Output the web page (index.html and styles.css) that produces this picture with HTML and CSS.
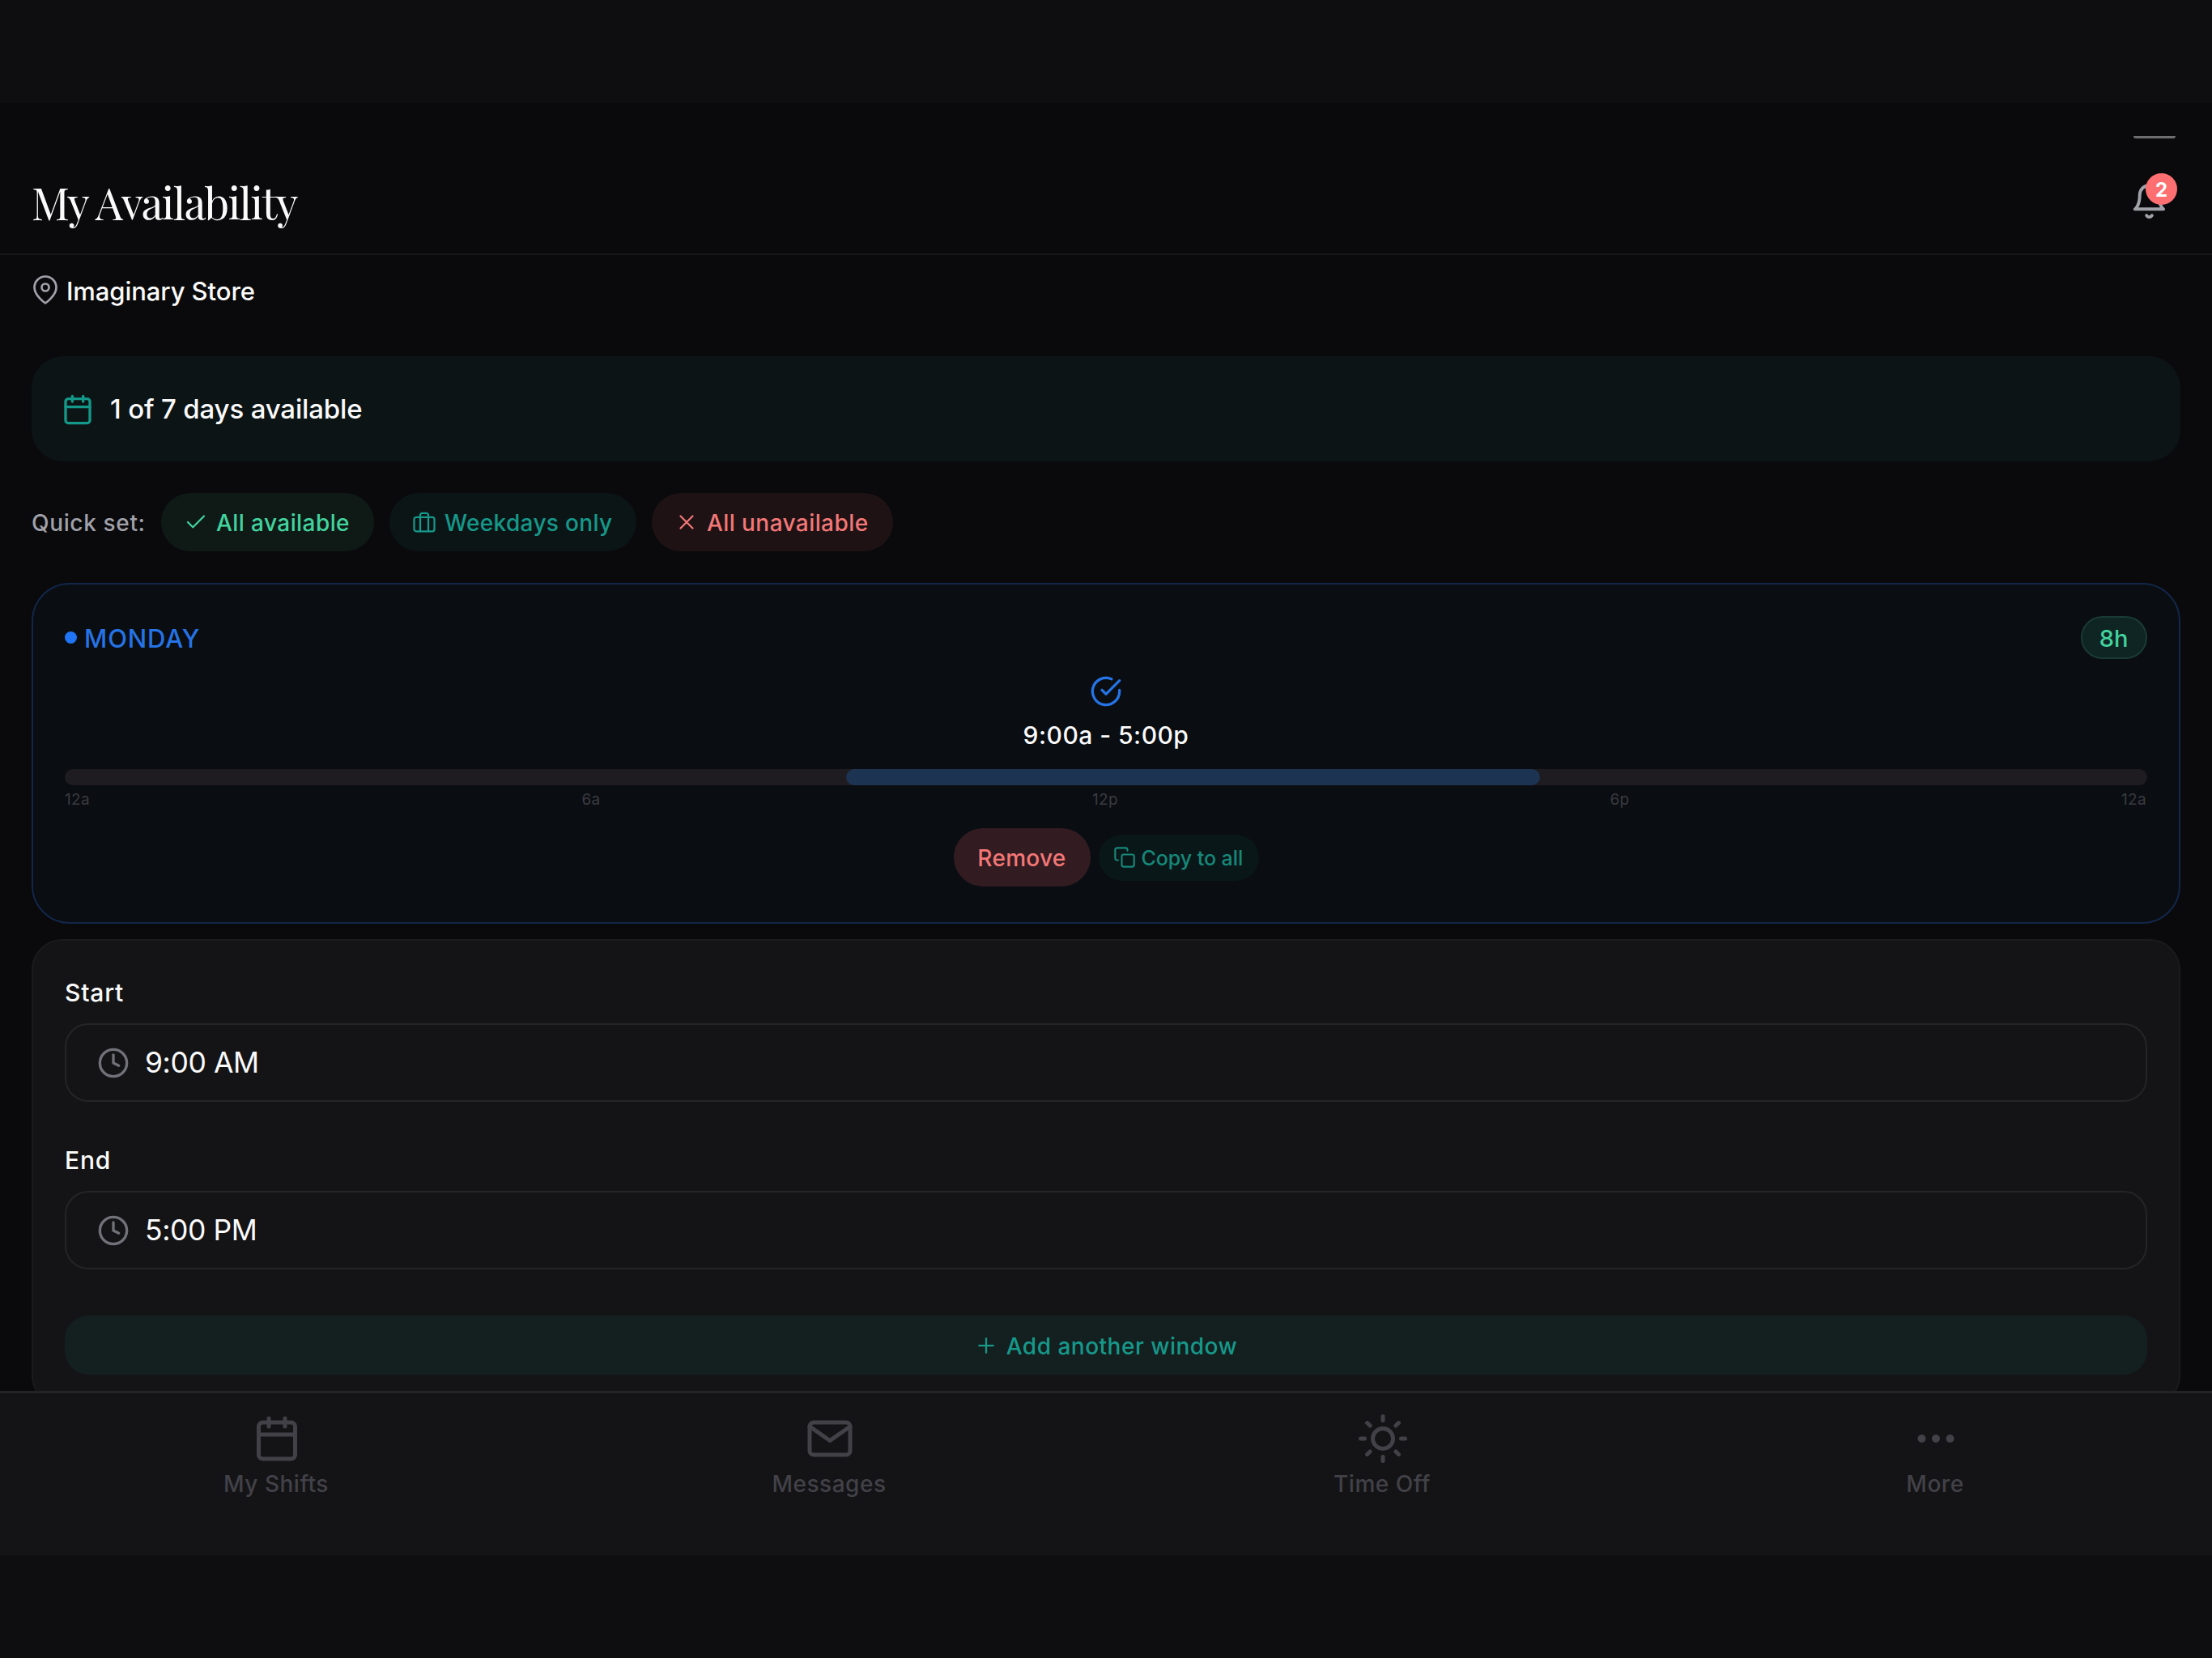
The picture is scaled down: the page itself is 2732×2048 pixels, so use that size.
FILE: index.html
```html
<!DOCTYPE html>
<html lang="en">
<head>
<meta charset="utf-8">
<title>My Availability</title>
<link rel="stylesheet" href="styles.css">
</head>
<body>
<div class="app">
  <header class="header">
    <div class="handle"></div>
    <div class="header-row">
      <h1 class="title">My Availability</h1>
      <div class="bell">
        <svg class="icon" width="47" height="47" viewBox="0 0 24 24"><path d="M18 8A6 6 0 0 0 6 8c0 7-3 9-3 9h18s-3-2-3-9"/><path d="M13.73 21a2 2 0 0 1-3.46 0"/></svg>
        <span class="bell-count">2</span>
      </div>
    </div>
  </header>

  <main class="content">
    <div class="store">
      <svg class="icon store-pin" width="36" height="36" viewBox="0 0 24 24"><path d="M21 10c0 7-9 13-9 13s-9-6-9-13a9 9 0 0 1 18 0z"/><circle cx="12" cy="10" r="3"/></svg>
      <span class="store-name">Imaginary Store</span>
    </div>

    <section class="summary">
      <svg class="icon" width="40" height="40" viewBox="0 0 24 24"><rect x="3" y="4" width="18" height="18" rx="2"/><path d="M16 2v4M8 2v4M3 10h18"/></svg>
      <span class="summary-text">1 of 7 days available</span>
    </section>

    <div class="quick">
      <span class="quick-label">Quick set:</span>
      <button class="pill pill-green"><svg class="icon" width="30" height="30" viewBox="0 0 24 24"><path d="M20 6L9 17l-5-5"/></svg><span>All available</span></button>
      <button class="pill pill-teal"><svg class="icon" width="30" height="30" viewBox="0 0 24 24"><rect x="2" y="7" width="20" height="14" rx="2"/><path d="M16 21V5a2 2 0 0 0-2-2h-4a2 2 0 0 0-2 2v16"/></svg><span>Weekdays only</span></button>
      <button class="pill pill-red"><svg class="icon" width="30" height="30" viewBox="0 0 24 24"><path d="M18 6L6 18M6 6l12 12"/></svg><span>All unavailable</span></button>
    </div>

    <section class="day">
      <div class="day-head">
        <span class="day-dot"></span>
        <span class="day-name">MONDAY</span>
        <span class="day-hours">8h</span>
      </div>
      <svg class="icon day-check" width="40" height="40" viewBox="0 0 24 24"><path d="M22 11.08V12a10 10 0 1 1-5.93-9.14"/><path d="M22 4L12 14.01l-3-3"/></svg>
      <div class="day-range"><span>9:00a - 5:00p</span></div>
      <div class="track"><div class="track-fill" style="margin-left:37.5%;width:33.333%"></div></div>
      <div class="ticks"><span>12a</span><span>6a</span><span>12p</span><span>6p</span><span>12a</span></div>
      <div class="actions">
        <button class="remove"><span>Remove</span></button>
        <button class="copy"><svg class="icon" width="28" height="28" viewBox="0 0 24 24"><rect x="9" y="9" width="13" height="13" rx="2"/><path d="M5 15H4a2 2 0 0 1-2-2V4a2 2 0 0 1 2-2h9a2 2 0 0 1 2 2v1"/></svg><span>Copy to all</span></button>
      </div>
    </section>

    <section class="editor">
      <div class="field">
        <label class="field-label"><span>Start</span></label>
        <div class="input"><svg class="icon" width="40" height="40" viewBox="0 0 24 24"><circle cx="12" cy="12" r="10"/><path d="M12 6v6l4 2"/></svg><span>9:00 AM</span></div>
      </div>
      <div class="field">
        <label class="field-label"><span>End</span></label>
        <div class="input"><svg class="icon" width="40" height="40" viewBox="0 0 24 24"><circle cx="12" cy="12" r="10"/><path d="M12 6v6l4 2"/></svg><span>5:00 PM</span></div>
      </div>
      <button class="add"><svg class="icon" width="30" height="30" viewBox="0 0 24 24"><path d="M12 5v14M5 12h14"/></svg><span>Add another window</span></button>
    </section>
  </main>

  <nav class="nav">
    <a class="tab"><svg class="icon" width="60" height="60" viewBox="0 0 24 24"><rect x="3" y="4" width="18" height="18" rx="2"/><path d="M16 2v4M8 2v4M3 10h18"/></svg><span>My Shifts</span></a>
    <a class="tab"><svg class="icon" width="60" height="60" viewBox="0 0 24 24"><path d="M4 4h16c1.1 0 2 .9 2 2v12c0 1.1-.9 2-2 2H4c-1.1 0-2-.9-2-2V6c0-1.1.9-2 2-2z"/><path d="M22 6l-10 7L2 6"/></svg><span>Messages</span></a>
    <a class="tab"><svg class="icon" width="60" height="60" viewBox="0 0 24 24"><circle cx="12" cy="12" r="5"/><path d="M12 1v2M12 21v2M4.22 4.22l1.42 1.42M18.36 18.36l1.42 1.42M1 12h2M21 12h2M4.22 19.78l1.42-1.42M18.36 5.64l1.42-1.42"/></svg><span>Time Off</span></a>
    <a class="tab"><svg class="icon" width="60" height="60" viewBox="0 0 24 24"><circle cx="12" cy="12" r="1"/><circle cx="19" cy="12" r="1"/><circle cx="5" cy="12" r="1"/></svg><span>More</span></a>
  </nav>
</div>
</body>
</html>
```

FILE: styles.css
```css
* { box-sizing: border-box; }

body {
  margin: 0;
  background: #0e0e10;
  color: #fafafa;
  font-family: Inter, "Liberation Sans", sans-serif;
  font-weight: 500;
}

button {
  border: 0;
  padding: 0;
  font: inherit;
  color: inherit;
  letter-spacing: inherit;
  background: none;
}

span { white-space: nowrap; }

.icon {
  display: block;
  flex: none;
  fill: none;
  stroke: currentColor;
  stroke-width: 2;
  stroke-linecap: round;
  stroke-linejoin: round;
}

.app {
  height: 2048px;
  padding: 127px 0;
  display: flex;
  flex-direction: column;
}

/* Header */
.header {
  height: 188px;
  flex: none;
  display: flex;
  flex-direction: column;
  background: #0a0a0c;
  border-bottom: 2px solid #171719;
}

.handle {
  width: 52px;
  height: 3px;
  margin: 41px 45px 0 0;
  align-self: flex-end;
  border-radius: 0 0 4px 4px;
  background: #6e6e71;
}

.header-row {
  flex: 1;
  display: flex;
  align-items: center;
  justify-content: space-between;
  padding: 22px 54px 0 39px;
}

.title {
  margin: 0 0 7px;
  font-family: "Playfair Display", "Liberation Serif", serif;
  font-size: 54px;
  line-height: 64px;
  font-weight: 400;
  letter-spacing: -1.68px;
}

.bell {
  position: relative;
  margin-bottom: 10px;
  color: #a1a1aa;
}

.bell-count {
  position: absolute;
  left: 19px;
  top: -11px;
  width: 39px;
  height: 39px;
  border-radius: 50%;
  background: #fd6f70;
  color: #fff;
  font-size: 24px;
  font-weight: 700;
  line-height: 41px;
  text-align: center;
}

/* Scrolling content */
.content {
  height: 1403px;
  flex: none;
  padding: 0 39px;
  overflow: hidden;
  background: #0a0a0c;
}

.store {
  height: 90px;
  margin-bottom: 35px;
  display: flex;
  align-items: center;
  gap: 8px;
}

.store-pin {
  color: #a1a1aa;
  stroke-width: 1.8;
  margin: 0 0 4px -1px;
}

.store-name { margin-bottom: 2px; font-size: 31px; letter-spacing: -.08px; }

.summary {
  height: 130px;
  padding-left: 37px;
  display: flex;
  align-items: center;
  gap: 20px;
  border-radius: 39px;
  background: #0c1415;
}

.summary .icon { margin-top: 1px; color: #14988a; }
.summary-text { font-size: 33px; letter-spacing: -.16px; }

.quick {
  margin: 39px 0;
  height: 72px;
  display: flex;
  align-items: center;
  gap: 19px;
  font-size: 28px;
  letter-spacing: .42px;
}

.quick-label { width: 141px; margin-top: 2px; color: #a1a1aa; letter-spacing: .65px; }

.pill {
  height: 72px;
  padding-left: 28px;
  display: flex;
  align-items: center;
  gap: 10px;
  border-radius: 36px;
}

.pill span { margin-top: 2px; }
.pill .icon { stroke-width: 1.8; }
.pill-green { width: 263px; color: #42d39e; background: #0f1a17; }
.pill-teal { width: 305px; color: #16988a; background: #0b1516; letter-spacing: .34px; }
.pill-red { width: 298px; color: #f37777; background: #1e1214; }

/* Day card */
.day {
  height: 421px;
  padding: 39px;
  border: 2px solid #12274a;
  border-radius: 47px;
  background: #0a0d12;
  display: flex;
  flex-direction: column;
}

.day-head {
  height: 53px;
  display: flex;
  align-items: center;
}

.day-dot {
  width: 15px;
  height: 15px;
  border-radius: 50%;
  background: #1f75f5;
}

.day-name {
  margin: 1px 0 0 9px;
  font-size: 31px;
  letter-spacing: .85px;
  color: #2573e4;
}

.day-hours {
  margin-left: auto;
  width: 82px;
  height: 53px;
  padding-right: 1px;
  border: 2px solid #1a3a36;
  border-radius: 27px;
  background: #0f2523;
  color: #42d39e;
  font-size: 29px;
  line-height: 51px;
  text-align: center;
}

.day-check {
  margin: 20px auto 0;
  color: #2573e4;
}

.day-range {
  margin-top: 17px;
  font-size: 30px;
  line-height: 35px;
  letter-spacing: .48px;
  text-align: center;
}

.track {
  height: 20px;
  margin-top: 24px;
  border-radius: 10px;
  background: #1e1c20;
}

.track-fill {
  height: 20px;
  border-radius: 10px;
  background: #1c3352;
}

.ticks {
  display: flex;
  justify-content: space-between;
  margin-top: 6px;
  padding-right: 1px;
  font-size: 19px;
  font-weight: 400;
  line-height: 24px;
  letter-spacing: .3px;
  color: #3a3b40;
}

.actions {
  height: 72px;
  margin-top: 23px;
  display: flex;
  align-items: center;
  justify-content: center;
  gap: 10px;
}

.remove {
  width: 169px;
  height: 72px;
  padding-top: 2px;
  border-radius: 36px;
  background: #321c21;
  color: #f37777;
  font-size: 28px;
  letter-spacing: .3px;
}

.copy {
  width: 198px;
  height: 57px;
  padding-left: 18px;
  display: flex;
  align-items: center;
  gap: 7px;
  border-radius: 29px;
  background: #0a1719;
  color: #168879;
  font-size: 25px;
}

.copy span { margin-top: 1px; letter-spacing: -.05px; }
.copy .icon { stroke-width: 1.8; }

/* Window editor */
.editor {
  height: 577px;
  margin-top: 19px;
  padding: 46px 39px 0;
  border: 2px solid #1b1b1e;
  border-radius: 38px;
  background: #141416;
}

.field { height: 207px; }

.field-label {
  display: block;
  font-size: 30px;
  line-height: 37px;
  letter-spacing: .8px;
}

.input {
  height: 97px;
  margin-top: 19px;
  padding: 0 0 0 38px;
  display: flex;
  align-items: center;
  gap: 19px;
  border: 2px solid #252528;
  border-radius: 29px;
  font-size: 35.5px;
  font-weight: 400;
  letter-spacing: -.4px;
}

.input .icon { color: #71717a; }

.add {
  width: 100%;
  height: 73px;
  margin-top: 3px;
  padding-right: 1px;
  display: flex;
  align-items: center;
  justify-content: center;
  gap: 10px;
  border-radius: 29px;
  background: #141f1f;
  color: #16988a;
  font-size: 28px;
  letter-spacing: .5px;
}

.add span { margin-top: 2px; }
.add .icon { stroke-width: 1.8; }

/* Tab bar */
.nav {
  height: 203px;
  flex: none;
  display: grid;
  grid-template-columns: repeat(4, 1fr);
  border-top: 3px solid #242427;
  background: #141416;
}

.tab {
  display: flex;
  flex-direction: column;
  align-items: center;
  padding-top: 26px;
  color: #424148;
  font-size: 28px;
  line-height: 36px;
  letter-spacing: .52px;
}

.tab span { margin: 8px 1px 0 0; }
```
